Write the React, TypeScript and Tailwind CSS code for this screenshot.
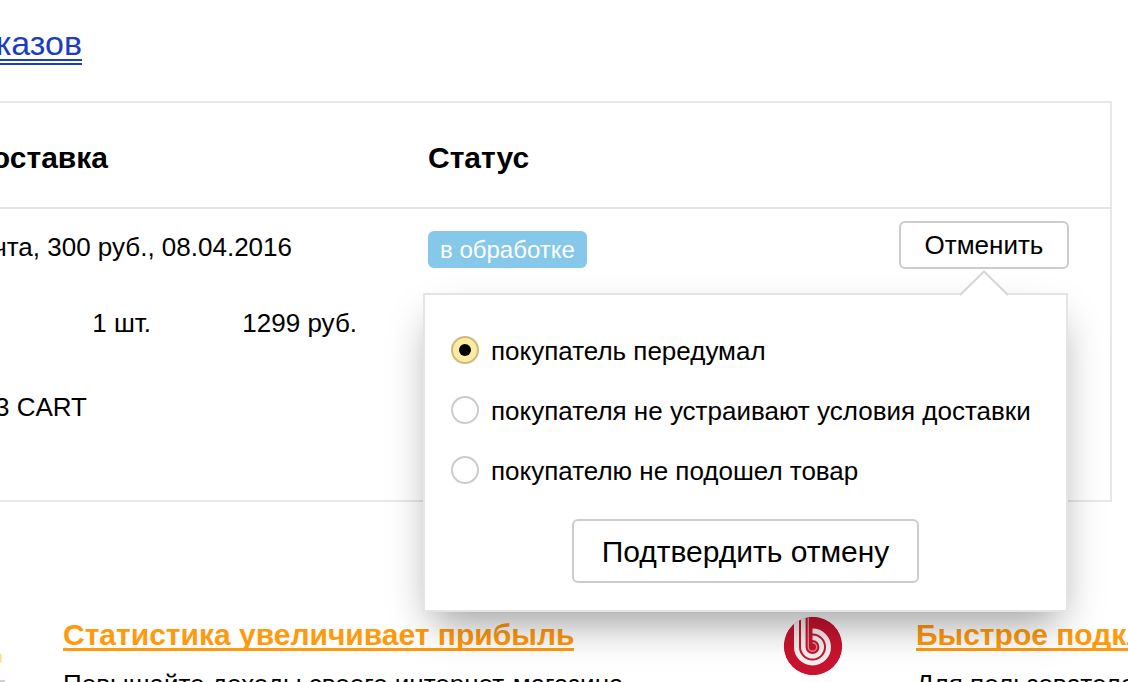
import { useState } from "react";

const reasons = [
  "покупатель передумал",
  "покупателя не устраивают условия доставки",
  "покупателю не подошел товар",
];

function BitrixLogo() {
  return (
    <svg viewBox="0 0 60 60" className="size-[60px] shrink-0" aria-hidden="true">
      <defs>
        <clipPath id="disc">
          <circle cx="30" cy="30" r="29.3" />
        </clipPath>
      </defs>
      <g clipPath="url(#disc)">
        <circle cx="30" cy="30" r="29.3" fill="#c8142f" />
        <g fill="none" stroke="#f7eeee">
          <path d="M13.5 0V31A16 16 0 1 0 29.5 15" strokeWidth="5" />
          <path d="M20.3 0V31A9.2 9.2 0 1 0 29.5 21.8" strokeWidth="4.6" />
          <path d="M25.3 0V31A4.2 4.2 0 1 0 29.5 26.8" strokeWidth="1.4" stroke="#df8d99" />
        </g>
      </g>
    </svg>
  );
}

function CancelPopup() {
  const [reason, setReason] = useState(0);
  return (
    <form className="absolute top-full right-px z-10 mt-6 w-[645px] border-2 border-[#e4e4e4] bg-white px-[26px] pt-[25px] pb-[27px] text-left shadow-[0_20px_40px_-10px_rgba(0,0,0,0.4)]">
      <svg
        viewBox="0 0 48 26"
        className="absolute right-[58px] bottom-full h-[26px] w-12 translate-y-px"
        aria-hidden="true"
      >
        <path d="M0 26L24 2L48 26Z" fill="#fff" />
        <path d="M0 25L24 1.5L48 25" fill="none" stroke="#d6d6d6" strokeWidth="2" />
      </svg>
      <fieldset>
        {reasons.map((text, i) => (
          <label key={text} className="flex h-[60px] items-center gap-3 whitespace-nowrap">
            <input
              type="radio"
              name="reason"
              checked={reason === i}
              onChange={() => setReason(i)}
              className="grid size-7 shrink-0 appearance-none place-content-center rounded-full border-2 border-[#ccc] bg-white before:size-3 before:rounded-full checked:border-[#ccba80] checked:bg-[#ffeba0] checked:before:bg-black"
            />
            <span className="pt-0.5">{text}</span>
          </label>
        ))}
      </fieldset>
      <div className="mt-[19px] flex justify-center">
        <button
          type="button"
          className="h-16 rounded-md border-2 border-[#ccc] bg-white px-7 pt-0.5 text-[30px] whitespace-nowrap"
        >
          Подтвердить отмену
        </button>
      </div>
    </form>
  );
}

export default function App() {
  return (
    <div className="h-screen overflow-hidden bg-white font-['Liberation_Sans',Arial,sans-serif] text-[26px] leading-[30px] text-black">
      <header className="flex h-[101px] items-start pt-7">
        <div className="flex w-[82px] justify-end">
          <a
            href="#orders"
            className="border-b-6 border-double border-[#1a3dc1] text-[34px] leading-[31px] text-[#1a3dc1]"
          >
            казов
          </a>
        </div>
      </header>

      <main className="mr-4 h-[401px] border-2 border-l-0 border-[#e8e8e8]">
        <table className="w-full border-collapse text-left">
          <thead>
            <tr className="h-[105px] border-b-2 border-[#e5e5e0] text-[30px]">
              <th className="w-[428px] pt-1.5 font-bold">
                <div className="flex w-[108px] justify-end">оставка</div>
              </th>
              <th className="pt-1.5 font-bold">Статус</th>
              <th>
                <span className="sr-only">Действия</span>
              </th>
            </tr>
          </thead>
          <tbody>
            <tr className="align-top">
              <td className="pt-[23px]">
                <div className="flex w-[292px] justify-end whitespace-nowrap">
                  чта, 300 руб., 08.04.2016
                </div>
                <div className="mt-[46px] flex">
                  <span className="w-[151px] text-right">1 шт.</span>
                  <span className="w-[206px] text-right">1299 руб.</span>
                </div>
                <div className="mt-[54px] flex w-[87px] justify-end whitespace-nowrap">3 CART</div>
              </td>
              <td className="pt-[22px]">
                <span className="inline-block rounded-md bg-[#86c8e9] px-3 pt-1 pb-[3px] text-[24px] text-white">
                  в обработке
                </span>
              </td>
              <td className="pt-3 pr-[41px]">
                <div className="relative ml-auto w-[170px]">
                  <button
                    type="button"
                    aria-expanded="true"
                    className="block h-12 w-full rounded-md border-2 border-[#ccc] bg-white text-center"
                  >
                    Отменить
                  </button>
                  <CancelPopup />
                </div>
              </td>
            </tr>
          </tbody>
        </table>
      </main>

      <footer className="flex pt-[114px]">
        <div className="flex w-[783px] shrink-0">
          <div className="w-[63px] shrink-0">
            <svg viewBox="0 0 63 66" className="h-[66px] w-[63px]" aria-hidden="true">
              <path d="M0 37L1.5 39V47H0Z" fill="#ffdf80" />
              <path d="M0 64H5V66H0Z" fill="#d5cdd5" />
            </svg>
          </div>
          <div className="pt-1.5 whitespace-nowrap">
            <a
              href="#stats"
              className="block w-fit border-b-3 border-[#ff990d] text-[30px] leading-[26px] font-bold text-[#ff990d]"
            >
              Статистика увеличивает прибыль
            </a>
            <p className="mt-[18px]">Повышайте доходы своего интернет-магазина</p>
          </div>
        </div>
        <div className="flex">
          <div className="w-[133px] shrink-0">
            <BitrixLogo />
          </div>
          <div className="pt-1.5 whitespace-nowrap">
            <a
              href="#connect"
              className="block w-fit border-b-3 border-[#ff990d] text-[30px] leading-[26px] font-bold text-[#ff990d]"
            >
              Быстрое подключение
            </a>
            <p className="mt-[18px]">Для пользователей</p>
          </div>
        </div>
      </footer>
    </div>
  );
}
